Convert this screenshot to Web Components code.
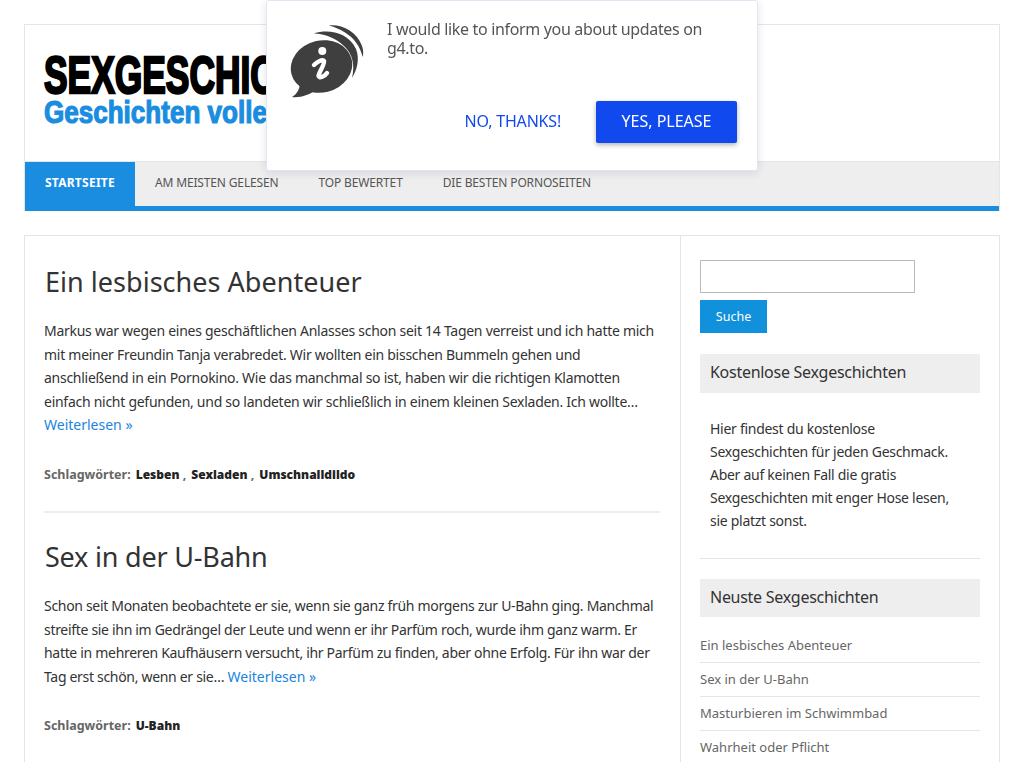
<!doctype html>
<html lang="de">
<head>
<meta charset="utf-8">
<title>Sexgeschichten</title>
<style>
html, body { margin: 0; height: 762px; overflow: hidden; background: #fff; }
body { font-family: "Noto Sans", sans-serif; color: #333; }
</style>
</head>
<body>
<site-page>
  <site-header slot="top"></site-header>
  <post-item title="Ein lesbisches Abenteuer" tags="Lesben,Sexladen,Umschnalldildo" style="--title-track: .03px">
    Markus war wegen eines geschäftlichen Anlasses schon seit 14 Tagen verreist und ich hatte mich<br>mit meiner Freundin Tanja verabredet. Wir wollten ein bisschen Bummeln gehen und<br>anschließend in ein Pornokino. Wie das manchmal so ist, haben wir die richtigen Klamotten<br>einfach nicht gefunden, und so landeten wir schließlich in einem kleinen Sexladen. Ich wollte…<br><a href="#">Weiterlesen »</a>
  </post-item>
  <post-item title="Sex in der U-Bahn" tags="U-Bahn" style="--track: -.31px; --title-track: -.2px">
    Schon seit Monaten beobachtete er sie, wenn sie ganz früh morgens zur U-Bahn ging. Manchmal<br>streifte sie ihn im Gedrängel der Leute und wenn er ihr Parfüm roch, wurde ihm ganz warm. Er<br>hatte in mehreren Kaufhäusern versucht, ihr Parfüm zu finden, aber ohne Erfolg. Für ihn war der<br>Tag erst schön, wenn er sie… <a href="#">Weiterlesen »</a>
  </post-item>
  <side-bar slot="side"></side-bar>
</site-page>
<notify-popup></notify-popup>

<script>
const FONT = '"Noto Sans", sans-serif';

class SitePage extends HTMLElement {
  constructor() {
    super();
    this.attachShadow({mode: 'open'}).innerHTML = `
<style>
:host { display: block; padding: 24px 24px 0; }
.content {
  display: flex;
  margin-top: 24px;
  border: 1px solid #e5e5e5;
  background: #fff;
}
.main { width: 616px; padding: 20px 20px 0 19px; border-right: 1px solid #e5e5e5; }
.side { flex: 1; padding: 24px 19px 0 19px; }
</style>
<slot name="top"></slot>
<div class="content">
  <div class="main"><slot></slot></div>
  <div class="side"><slot name="side"></slot></div>
</div>`;
  }
}
customElements.define('site-page', SitePage);

class SiteHeader extends HTMLElement {
  constructor() {
    super();
    const links = ['Startseite', 'Am meisten gelesen', 'Top bewertet', 'Die besten Pornoseiten'];
    this.attachShadow({mode: 'open'}).innerHTML = `
<style>
:host { display: block; border: 1px solid #e5e5e5; border-bottom: 0; font-family: ${FONT}; }
.brand { height: 136px; border-bottom: 1px solid #e5e5e5; padding: 0 0 0 19px; overflow: hidden; }
.logo {
  font-family: "Liberation Sans", sans-serif;
  font-weight: 700;
  white-space: nowrap;
  transform-origin: 0 0;
}
.logo-a {
  margin-top: 25px;
  font-size: 52px;
  line-height: 50px;
  color: #000;
  -webkit-text-stroke: 2.5px #000;
  transform: scaleX(.68);
}
.logo-b {
  margin-top: -3px;
  font-size: 31px;
  line-height: 32px;
  color: #1a8de0;
  -webkit-text-stroke: 1.2px #1a8de0;
  transform: scaleX(.84);
}
nav { display: flex; background: #eee; border-bottom: 5px solid #1a8de0; height: 44px; }
a {
  display: block;
  padding: 0 20px;
  font-size: 12px;
  line-height: 41px;
  letter-spacing: -.15px;
  text-transform: uppercase;
  text-decoration: none;
  color: #555;
}
a.on { background: #1a8de0; color: #fff; font-weight: 700; height: 44px; letter-spacing: .25px; }
</style>
<div class="brand">
  <div class="logo logo-a">SEXGESCHICHTEN</div>
  <div class="logo logo-b">Geschichten voller Lust</div>
</div>
<nav>${links.map((t, i) => `<a href="#" class="${i ? '' : 'on'}">${t}</a>`).join('')}</nav>`;
  }
}
customElements.define('site-header', SiteHeader);

class PostItem extends HTMLElement {
  constructor() {
    super();
    const tags = this.getAttribute('tags').split(',');
    this.attachShadow({mode: 'open'}).innerHTML = `
<style>
:host { display: block; font-family: ${FONT}; padding-bottom: 26px; margin-bottom: 18px; border-bottom: 2px solid #eee; }
h2 { margin: 0 0 12px 1px; padding-top: 1px; font-size: 27px; line-height: 50px; letter-spacing: var(--title-track, 0); font-weight: 400; color: #333; }
.text { font-size: 14px; line-height: 23.6px; letter-spacing: var(--track, -.27px); white-space: nowrap; color: #333; }
::slotted(a) { color: #1a84e0; text-decoration: none; letter-spacing: 0; }
.tags { margin-top: 28px; font-size: 12.5px; line-height: 20px; font-weight: 700; color: #666; }
.tags b { color: #222; margin-left: 5px; font-size: 12px; }
</style>
<h2>${this.getAttribute('title')}</h2>
<div class="text"><slot></slot></div>
<div class="tags">Schlagwörter:${tags.map((t, i) => `<b>${t}</b>${i < tags.length - 1 ? ' ,' : ''}`).join('')}</div>`;
  }
}
customElements.define('post-item', PostItem);

class SideBar extends HTMLElement {
  constructor() {
    super();
    const latest = ['Ein lesbisches Abenteuer', 'Sex in der U-Bahn', 'Masturbieren im Schwimmbad', 'Wahrheit oder Pflicht'];
    this.attachShadow({mode: 'open'}).innerHTML = `
<style>
:host { display: block; font-family: ${FONT}; color: #333; }
input { display: block; box-sizing: border-box; width: 215px; height: 33px; border: 1px solid #bbb; background: #fff; margin: 0; }
button {
  display: block; margin-top: 7px; width: 67px; height: 33px; border: 0; padding: 0;
  background: #1190dc; color: #fff; font: 12.5px ${FONT};
}
h3 { margin: 0; padding: 0 10px 1px; background: #eee; font-size: 16px; line-height: 37px; letter-spacing: -.28px; font-weight: 400; color: #333; }
.first { padding-bottom: 2px; margin-top: 21px; }
.about { padding: 24px 10px 26px; font-size: 14px; line-height: 23px; letter-spacing: -.28px; white-space: nowrap; border-bottom: 1px solid #e5e5e5; margin-bottom: 20px; }
ul { list-style: none; margin: 12px 0 0; padding: 0; }
li { font-size: 13px; line-height: 33px; border-bottom: 1px solid #e5e5e5; color: #666; }
</style>
<input type="text" aria-label="Suche">
<button>Suche</button>
<h3 class="first">Kostenlose Sexgeschichten</h3>
<div class="about">Hier findest du kostenlose<br>Sexgeschichten für jeden Geschmack.<br>Aber auf keinen Fall die gratis<br>Sexgeschichten mit enger Hose lesen,<br>sie platzt sonst.</div>
<h3>Neuste Sexgeschichten</h3>
<ul>${latest.map(t => `<li>${t}</li>`).join('')}</ul>`;
  }
}
customElements.define('side-bar', SideBar);

class NotifyPopup extends HTMLElement {
  constructor() {
    super();
    this.attachShadow({mode: 'open'}).innerHTML = `
<style>
:host {
  position: fixed; top: 0; left: 266px;
  box-sizing: border-box; width: 492px; height: 171px;
  background: #fff;
  border: 1px solid #e4e4f2;
  border-radius: 3px;
  box-shadow: 0 2px 8px rgba(70, 70, 120, .14);
  font-family: ${FONT};
}
svg { position: absolute; left: 21px; top: 21px; }
p { position: absolute; left: 120px; top: 19px; margin: 0; width: 340px; font-size: 16px; line-height: 18.5px; letter-spacing: -.33px; color: #555; }
.actions { position: absolute; right: 20px; top: 100px; display: flex; align-items: center; gap: 35px; }
.no { font-size: 16px; letter-spacing: -.2px; line-height: 40px; padding-bottom: 2px; color: #1049ee; }
.yes {
  width: 141px; height: 42px; line-height: 41px; text-align: center;
  background: #1049ee; color: #fff; font-size: 16px; border-radius: 2px;
  box-shadow: 0 2px 5px rgba(0, 0, 0, .3);
}
</style>
<svg width="80" height="80" viewBox="0 0 80 80" fill="#3f3f3f">
  <ellipse cx="33.5" cy="44.5" rx="31" ry="26" transform="rotate(-14 33.5 44.5)"/>
  <path d="M12 60 C12 67 9 72 4 75 C12 76 22 73 29 67Z"/>
  <path d="M26 11.5 C40 7 60 10 68 27 C72 37 69 48 64 56 C67 44 65 32 56 24 C48 16 37 12 26 11.5Z"/>
  <path d="M41 3.5 C53 2 69 9 74 24 C75.500 28 75.500 32 74.700 35 C72 24 66 16 57 10.500 C52 7.500 47 5 41 3.500Z"/>
  <circle cx="34.300" cy="29" r="4" fill="#fff"/>
  <path d="M26 43 C29 40 34 37 36 39 C37 42 31 50 30.500 54 C31 57 37 54 39 51" fill="none" stroke="#fff" stroke-width="4.400" stroke-linecap="round"/>
</svg>
<p>I would like to inform you about updates on g4.to.</p>
<div class="actions"><span class="no">NO, THANKS!</span><span class="yes">YES, PLEASE</span></div>`;
  }
}
customElements.define('notify-popup', NotifyPopup);
</script>
</body>
</html>
